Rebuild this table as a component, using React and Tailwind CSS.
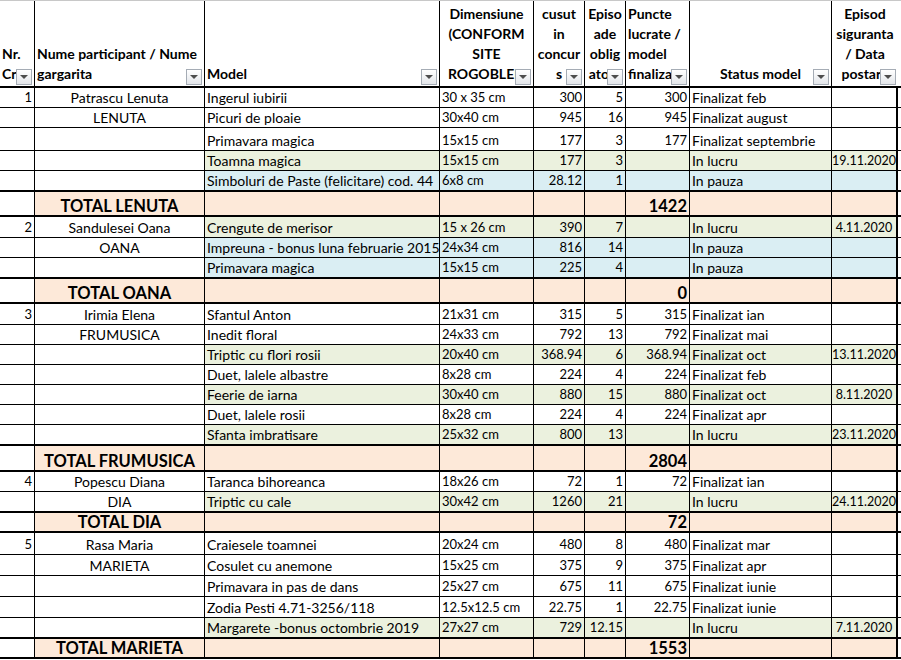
const W = ["w-[35px]", "w-[170px]", "w-[235px]", "w-[94px]", "w-[51px]", "w-[41px]", "w-[64px]", "w-[142px]", "w-[66px]"];

const BG = { w: "bg-white", g: "bg-[#ebf1de]", b: "bg-[#daeef3]", o: "bg-[#fde9d9]" };

// nr, name, model, dim, cusut, ep, pct, status, date, colour, height
const groups = [
  {
    total: "TOTAL LENUTA", sum: "1422", th: "h-[25px]",
    rows: [
      ["1", "Patrascu Lenuta", "Ingerul iubirii", "30 x 35 cm", "300", "5", "300", "Finalizat feb", "", "w", "h-[20px]"],
      ["", "LENUTA", "Picuri de ploaie", "30x40 cm", "945", "16", "945", "Finalizat august", "", "w", "h-[20px]"],
      ["", "", "Primavara magica", "15x15 cm", "177", "3", "177", "Finalizat septembrie", "", "w", "h-[23px]"],
      ["", "", "Toamna magica", "15x15 cm", "177", "3", "", "In lucru", "19.11.2020", "g", "h-[20px]"],
      ["", "", "Simboluri de Paste (felicitare) cod. 44", "6x8 cm", "28.12", "1", "", "In pauza", "", "b", "h-[21px]"],
    ],
  },
  {
    total: "TOTAL OANA", sum: "0", th: "h-[25px]",
    rows: [
      ["2", "Sandulesei Oana", "Crengute de merisor", "15 x 26 cm", "390", "7", "", "In lucru", "4.11.2020", "g", "h-[21px]"],
      ["", "OANA", "Impreuna - bonus luna februarie 2015", "24x34 cm", "816", "14", "", "In pauza", "", "b", "h-[20px]"],
      ["", "", "Primavara magica", "15x15 cm", "225", "4", "", "In pauza", "", "b", "h-[21px]"],
    ],
  },
  {
    total: "TOTAL FRUMUSICA", sum: "2804", th: "h-[26px]",
    rows: [
      ["3", "Irimia Elena", "Sfantul Anton", "21x31 cm", "315", "5", "315", "Finalizat ian", "", "w", "h-[21px]"],
      ["", "FRUMUSICA", "Inedit floral", "24x33 cm", "792", "13", "792", "Finalizat mai", "", "w", "h-[20px]"],
      ["", "", "Triptic cu flori rosii", "20x40 cm", "368.94", "6", "368.94", "Finalizat oct", "13.11.2020", "g", "h-[20px]"],
      ["", "", "Duet, lalele albastre", "8x28 cm", "224", "4", "224", "Finalizat feb", "", "w", "h-[20px]"],
      ["", "", "Feerie de iarna", "30x40 cm", "880", "15", "880", "Finalizat oct", "8.11.2020", "g", "h-[20px]"],
      ["", "", "Duet, lalele rosii", "8x28 cm", "224", "4", "224", "Finalizat apr", "", "w", "h-[20px]"],
      ["", "", "Sfanta imbratisare", "25x32 cm", "800", "13", "", "In lucru", "23.11.2020", "g", "h-[21px]"],
    ],
  },
  {
    total: "TOTAL DIA", sum: "72", th: "h-[20px]",
    rows: [
      ["4", "Popescu Diana", "Taranca bihoreanca", "18x26 cm", "72", "1", "72", "Finalizat ian", "", "w", "h-[20px]"],
      ["", "DIA", "Triptic cu cale", "30x42 cm", "1260", "21", "", "In lucru", "24.11.2020", "g", "h-[21px]"],
    ],
  },
  {
    total: "TOTAL MARIETA", sum: "1553", th: "h-[20px]",
    rows: [
      ["5", "Rasa Maria", "Craiesele toamnei", "20x24 cm", "480", "8", "480", "Finalizat mar", "", "w", "h-[22px]"],
      ["", "MARIETA", "Cosulet cu anemone", "15x25 cm", "375", "9", "375", "Finalizat apr", "", "w", "h-[21px]"],
      ["", "", "Primavara in pas de dans", "25x27 cm", "675", "11", "675", "Finalizat iunie", "", "w", "h-[21px]"],
      ["", "", "Zodia Pesti 4.71-3256/118", "12.5x12.5 cm", "22.75", "1", "22.75", "Finalizat iunie", "", "w", "h-[21px]"],
      ["", "", "Margarete -bonus octombrie 2019", "27x27 cm", "729", "12.15", "", "In lucru", "7.11.2020", "g", "h-[21px]"],
    ],
  },
];

// per column: alignment, font size, padding
const COL = [
  "justify-end text-[13px] px-[2px]",
  "justify-center text-[14px] px-[2px]",
  "justify-start text-[14px] px-[2px]",
  "justify-start text-[13px] px-[2px]",
  "justify-end text-[13px] px-[2px]",
  "justify-end text-[13px] px-[2px]",
  "justify-end text-[13px] px-[2px]",
  "justify-start text-[14px] px-[2px]",
  "justify-center text-[12.5px] px-0",
];

function Filter() {
  return (
    <div className="absolute right-[2px] bottom-[1px] z-10 flex h-[16px] w-[16px] items-center justify-center border border-[#a5acb5] bg-gradient-to-b from-white to-[#e3e6ea]">
      <div className="h-0 w-0 border-x-[4px] border-t-[4px] border-x-transparent border-t-[#4d4d4d]" />
    </div>
  );
}

function Head({ i, lines, align = "text-center", last }) {
  return (
    <div className={`${W[i]} relative flex h-full flex-col justify-end overflow-hidden pb-[2px] ${last ? "" : "border-r border-black"}`}>
      <div className={`${align} whitespace-nowrap px-[2px] text-[14px] font-bold leading-[20px]`}>
        {lines.map((l, k) => <div key={k}>{l}</div>)}
      </div>
      <Filter />
    </div>
  );
}

function Cell({ i, bg, children, last }) {
  return (
    <div className={`${W[i]} ${BG[bg]} ${COL[i]} flex h-full items-end overflow-hidden whitespace-nowrap pb-[1px] leading-[17px] ${last ? "border-r-2" : "border-r"} border-black`}>
      {children}
    </div>
  );
}

function Row({ r, end }) {
  const colour = r[9];
  return (
    <div className={`flex ${r[10]} ${end ? "border-b-2" : "border-b"} border-black`}>
      {r.slice(0, 9).map((v, i) => (
        <Cell key={i} i={i} bg={i < 2 ? "w" : colour} last={i === 8}>{v}</Cell>
      ))}
    </div>
  );
}

function TotalRow({ g }) {
  return (
    <div className={`flex ${g.th} border-b-2 border-black`}>
      {W.map((w, i) => (
        <div key={i} className={`${w} ${i === 0 ? "bg-white" : BG.o} flex h-full items-end whitespace-nowrap px-[2px] ${i === 1 ? "justify-center" : "justify-end"} ${i === 8 ? "border-r-2" : "border-r"} border-black text-[16.5px] font-bold leading-[18px]`}>
          {i === 1 ? g.total : i === 6 ? g.sum : ""}
        </div>
      ))}
    </div>
  );
}

export default function App() {
  return (
    <div className="h-[660px] w-[901px] overflow-hidden bg-white text-black" style={{ fontFamily: "Lato, 'Noto Sans', sans-serif" }}>
      <div className="flex h-[88px] border-t border-b-2 border-t-[#c8c8c8] border-b-black">
        <Head i={0} lines={["Nr.", "Crt."]} align="text-left" />
        <Head i={1} lines={["Nume participant / Nume", "gargarita"]} align="text-left" />
        <Head i={2} lines={["Model"]} align="text-left" />
        <Head i={3} lines={["Dimensiune", "(CONFORM", "SITE", "ROGOBLEN"]} />
        <Head i={4} lines={["cusut", "in", "concur", "s"]} />
        <Head i={5} lines={["Episo", "ade", "oblig", "atorii"]} />
        <Head i={6} lines={["Puncte", "lucrate /", "model", "finalizat"]} align="text-left" />
        <Head i={7} lines={["Status model"]} />
        <Head i={8} lines={["Episod", "siguranta", "/ Data", "postare"]} last />
      </div>
      {groups.map((g, gi) => (
        <div key={gi}>
          {g.rows.map((r, ri) => (
            <Row key={ri} r={r} end={ri === g.rows.length - 1} />
          ))}
          <TotalRow g={g} />
        </div>
      ))}
    </div>
  );
}
